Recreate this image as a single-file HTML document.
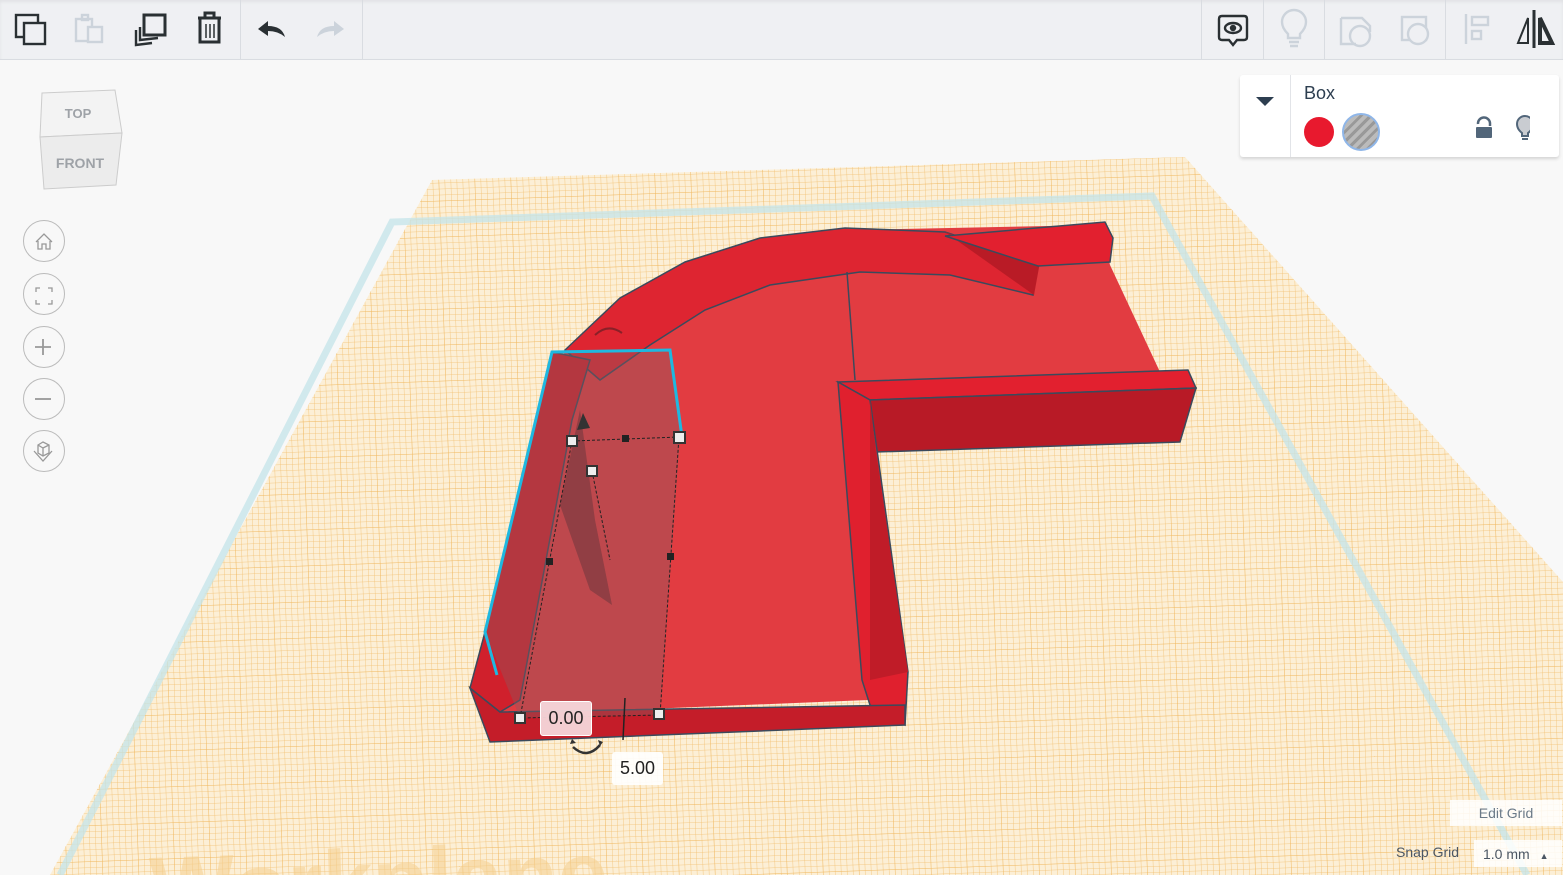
<!DOCTYPE html>
<html><head><meta charset="utf-8">
<style>
html,body{margin:0;padding:0;width:1563px;height:875px;overflow:hidden;background:#f8f8f8;font-family:"Liberation Sans",sans-serif}
.tb{position:absolute;left:0;top:0;width:1563px;height:59px;background:#eff0f3;border-bottom:1px solid #d9dce1;box-shadow:inset 0 2px 3px rgba(0,0,0,.06)}
.sep{position:absolute;top:0;width:1px;height:59px;background:#d9dce1}
.panel{position:absolute;left:1240px;top:75px;width:319px;height:82px;background:#fff;border-radius:3px;box-shadow:0 2px 3px rgba(0,0,0,.15)}
.nav{position:absolute;left:23px;width:40px;height:40px;border:1px solid #bbb;border-radius:50%;background:#f8f8f8}
.lbl{position:absolute;background:rgba(255,255,255,.9);border-radius:3px;font-size:18px;color:#222;text-align:center}
</style></head><body>
<svg width="1563" height="875" style="position:absolute;left:0;top:0;overflow:hidden">
<defs>
<pattern id="g" width="6" height="6" patternUnits="userSpaceOnUse" patternTransform="rotate(-2)">
<rect width="6" height="6" fill="#fcefd6"/>
<path d="M0 0H6M0 0V6" stroke="#f2c070" stroke-width="0.8"/>
</pattern>
<pattern id="g2" width="36" height="36" patternUnits="userSpaceOnUse" patternTransform="rotate(-2)">
<path d="M0 0H36M0 0V36" stroke="#eeae48" stroke-width="1"/>
</pattern>
<clipPath id="c"><rect width="1563" height="875"/></clipPath>
</defs>
<g clip-path="url(#c)">
<polygon points="432,180 1185,157 1563,582 1563,875 50,875" fill="url(#g)"/>
<polygon points="432,180 1185,157 1563,582 1563,875 50,875" fill="url(#g2)" opacity=".5"/>
<polyline points="60,875 392,222 1152,196 1527,875" fill="none" stroke="#c4e4ea" stroke-width="7" opacity=".75"/>
<text x="150" y="920" font-size="90" font-weight="bold" fill="#f5cf8e" opacity=".55" transform="rotate(-2 150 900)">Workplane</text>
</g>
<!-- floor -->
<polygon points="565,350 620,300 690,262 760,240 850,230 1100,225 1110,265 1160,372 840,382 868,700 500,715 485,690" fill="#e23c41"/>
<!-- curved wall -->
<polygon points="565,350 620,298 685,262 760,238 845,228 945,232 1035,262 1033,295 950,275 860,272 770,285 705,310 650,345 600,380" fill="#de2531" stroke="#3b4a5c" stroke-width="1.5"/>
<polygon points="945,232 1040,262 1034,295" fill="#b91b26"/>
<polygon points="945,236 1105,222 1113,238 1110,262 1038,266" fill="#e2202f" stroke="#3b4a5c" stroke-width="1.5"/>
<line x1="847" y1="272" x2="855" y2="380" stroke="#3b4a5c" stroke-width="1.5"/>
<!-- arm -->
<polygon points="838,382 1188,370 1196,388 870,400" fill="#e2202f" stroke="#3b4a5c" stroke-width="1.5"/>
<polygon points="870,400 1196,388 1180,442 876,452" fill="#b81a26" stroke="#3b4a5c" stroke-width="1.5"/>
<polygon points="838,382 870,400 908,672 905,725 870,705 862,680" fill="#e0202e" stroke="#3b4a5c" stroke-width="1.5"/>
<polygon points="870,400 876,452 908,672 870,680" fill="#c01c28"/>
<!-- front strip -->
<polygon points="470,688 490,742 905,725 905,705 500,712" fill="#c41d29" stroke="#3b4a5c" stroke-width="1.5"/>
<!-- left wall -->
<polygon points="552,352 485,632 470,688 500,712 520,700 572,420 590,360" fill="#d0202c" stroke="#3b4a5c" stroke-width="1.5"/>
<!-- selection box -->
<polygon points="552,352 670,350 680,437 660,715 520,718 485,632" fill="#8a5a60" opacity=".4"/>
<polygon points="560,505 580,410 595,520 612,605 590,590" fill="#7e3a40" opacity=".7"/>
<polyline points="497,675 485,632 552,352 670,350 682,437" fill="none" stroke="#1fb8e0" stroke-width="3"/>
<polyline points="572,441 679,437 660,715 520,718 572,441" fill="none" stroke="#222" stroke-width="1" stroke-dasharray="3,2"/>
<line x1="592" y1="471" x2="610" y2="560" stroke="#222" stroke-dasharray="3,2"/>
<g fill="#eee" stroke="#333" stroke-width="2">
<rect x="567" y="436" width="10" height="10"/><rect x="674" y="432" width="11" height="11"/>
<rect x="587" y="466" width="10" height="10"/><rect x="515" y="713" width="10" height="10"/><rect x="654" y="709" width="10" height="10"/></g>
<g fill="#222"><rect x="622" y="435" width="7" height="7"/><rect x="546" y="558" width="7" height="7"/><rect x="667" y="553" width="7" height="7"/></g>
<line x1="625" y1="698" x2="623" y2="740" stroke="#222" stroke-width="1.5"/>
<path d="M573 747 Q587 760 600 745" fill="none" stroke="#333" stroke-width="2.5"/>
<path d="M570 744 l2 -5 l4 4z M603 742 l-5 -2 l2 6z" fill="#333"/>
<path d="M595 335 Q608 323 622 333" fill="none" stroke="#8a2028" stroke-width="2"/>
<path d="M577 430 L583 413 L590 428 Z" fill="#333"/>
</svg>

<div class="lbl" style="left:540px;top:701px;width:50px;height:33px;line-height:33px;background:rgba(245,215,218,.95);border:1px solid #fff">0.00</div>
<div class="lbl" style="left:612px;top:752px;width:51px;height:33px;line-height:33px">5.00</div>

<div class="tb">
<svg width="1563" height="59" style="position:absolute;left:0;top:0" fill="none" stroke-width="2.4">
<g stroke="#2a3033"><rect x="16" y="15" width="22" height="22"/><rect x="24" y="23" width="21" height="21" fill="#eff0f3"/></g>
<g stroke="#ccd3db"><rect x="76" y="19" width="16" height="22"/><rect x="88" y="27" width="14" height="15" fill="#eff0f3"/><rect x="82" y="15" width="6" height="5"/></g>
<g stroke="#2a3033"><path d="M136 30 L136 45 L152 43" /><path d="M140 27 L140 40 L158 38"/><rect x="144" y="15" width="21" height="20" fill="#eff0f3" stroke-width="3"/></g>
<g stroke="#2a3033" stroke-width="3"><path d="M198 18 H221"/><path d="M205 18 V13 H214 V18"/><path d="M200 19 V42 H219 V19"/><path d="M206 24V38M210 24V38M214 24V38" stroke-width="1.5"/></g>
<path d="M258 29 L268 21 L268 26 Q282 26 285 37 Q278 31 268 31 L268 36 Z" fill="#2a3033" stroke="none"/>
<path d="M344 29 L334 21 L334 26 Q320 26 317 37 Q324 31 334 31 L334 36 Z" fill="#ccd3db" stroke="none"/>
<g stroke="#2a3033"><path d="M1222 16 H1244 Q1247 16 1247 19 V37 Q1247 40 1244 40 H1237 L1233 45 L1229 40 H1222 Q1219 40 1219 37 V19 Q1219 16 1222 16Z"/><ellipse cx="1233" cy="28" rx="8" ry="5"/><circle cx="1233" cy="28" r="2" fill="#2a3033"/></g>
<g stroke="#ccd3db"><path d="M1288 34 Q1282 28 1282 22 A12 12 0 0 1 1306 22 Q1306 28 1300 34 V38 H1288Z"/><path d="M1289 42 H1299M1290 46 H1298"/></g>
<g stroke="#ccd3db"><path d="M1341 18 H1362 L1370 26 V32"/><path d="M1341 18 V44 H1356"/><circle cx="1360" cy="36" r="10"/></g>
<g stroke="#ccd3db"><rect x="1402" y="17" width="24" height="23"/><circle cx="1418" cy="34" r="10" fill="#eff0f3"/></g>
<g stroke="#ccd3db"><path d="M1466 14 V44"/><rect x="1472" y="17" width="16" height="8"/><rect x="1472" y="31" width="9" height="8"/></g>
<g stroke="#2a3033"><path d="M1534 10 V48" stroke-width="3"/><path d="M1528 18 L1518 43 H1528Z" stroke-width="2"/><path d="M1540 18 L1552 43 H1540Z" stroke-width="4"/></g>
</svg>
<div class="sep" style="left:240px"></div><div class="sep" style="left:362px"></div>
<div class="sep" style="left:1201px"></div><div class="sep" style="left:1263px"></div><div class="sep" style="left:1324px"></div><div class="sep" style="left:1445px"></div>
</div>

<div class="panel">
<div style="position:absolute;left:50px;top:0;width:1px;height:82px;background:#e2e4e8"></div>
<div style="position:absolute;left:16px;top:22px;width:0;height:0;border-left:9px solid transparent;border-right:9px solid transparent;border-top:9px solid #2d3e50"></div>
<div style="position:absolute;left:64px;top:8px;font-size:18px;color:#2d3e50">Box</div>
<div style="position:absolute;left:64px;top:42px;width:30px;height:30px;border-radius:50%;background:#e8192e"></div>
<div style="position:absolute;left:102px;top:38px;width:34px;height:34px;border-radius:50%;border:2px solid #8fb6e8;background:repeating-linear-gradient(135deg,#bbb 0 4px,#999 4px 7px)"></div>
<svg width="60" height="40" style="position:absolute;left:230px;top:38px">
<path d="M8 11 A6 6 0 0 1 20 10 V13" fill="none" stroke="#52667a" stroke-width="2.5"/><rect x="6" y="14" width="16" height="11" rx="1" fill="#52667a"/>
<path d="M52 20 Q47 16 47 11 A8 8 0 0 1 63 11 Q63 16 58 20 V23 H52Z" fill="#c9ccd1" stroke="#52667a" stroke-width="2"/><path d="M52 26 H58" stroke="#52667a" stroke-width="2"/>
</svg>
</div>

<svg width="110" height="110" style="position:absolute;left:30px;top:85px">
<polygon points="12,8 85,5 92,48 10,52" fill="#f3f3f3" stroke="#ccc"/>
<polygon points="10,52 92,48 86,100 14,104" fill="#ececec" stroke="#ccc"/>
<text x="48" y="33" font-size="13" font-weight="bold" fill="#9ea2a7" text-anchor="middle" font-family="Liberation Sans">TOP</text>
<text x="50" y="83" font-size="14" font-weight="bold" fill="#9ea2a7" text-anchor="middle" font-family="Liberation Sans">FRONT</text>
</svg>
<div class="nav" style="top:220px"></div><div class="nav" style="top:273px"></div><div class="nav" style="top:326px"></div><div class="nav" style="top:378px"></div><div class="nav" style="top:430px"></div>
<svg width="60" height="270" style="position:absolute;left:14px;top:215px" fill="none" stroke="#999" stroke-width="1.3">
<path d="M22 27 L30 19 L38 27 M24 26 V34 H28 V29 H32 V34 H36 V26"/>
<path d="M22 77 V73 H26 M34 73 H38 V77 M38 85 V89 H34 M26 89 H22 V85"/>
<path d="M29 124 V140 M21 132 H37" stroke-width="1.8"/>
<path d="M21 184 H37" stroke-width="1.8"/>
<path d="M24 230 L29 227 L35 230 V238 L29 241 L24 238Z M24 230 L29 233 L35 230 M29 233 V241 M20 236 L29 246 L38 236"/>
</svg>

<div style="position:absolute;left:1450px;top:800px;width:112px;height:26px;background:rgba(255,255,255,.85);font-size:14px;color:#6b7a88;line-height:26px;text-align:center">Edit Grid</div>
<div style="position:absolute;left:1396px;top:844px;font-size:14px;color:#4b5663">Snap Grid</div>
<div style="position:absolute;left:1474px;top:840px;width:88px;height:27px;background:rgba(255,255,255,.85);font-size:14px;color:#4b5663;line-height:28px;padding-left:9px;box-sizing:border-box">1.0 mm <span style="font-size:9px;margin-left:6px">▲</span></div>
</body></html>
